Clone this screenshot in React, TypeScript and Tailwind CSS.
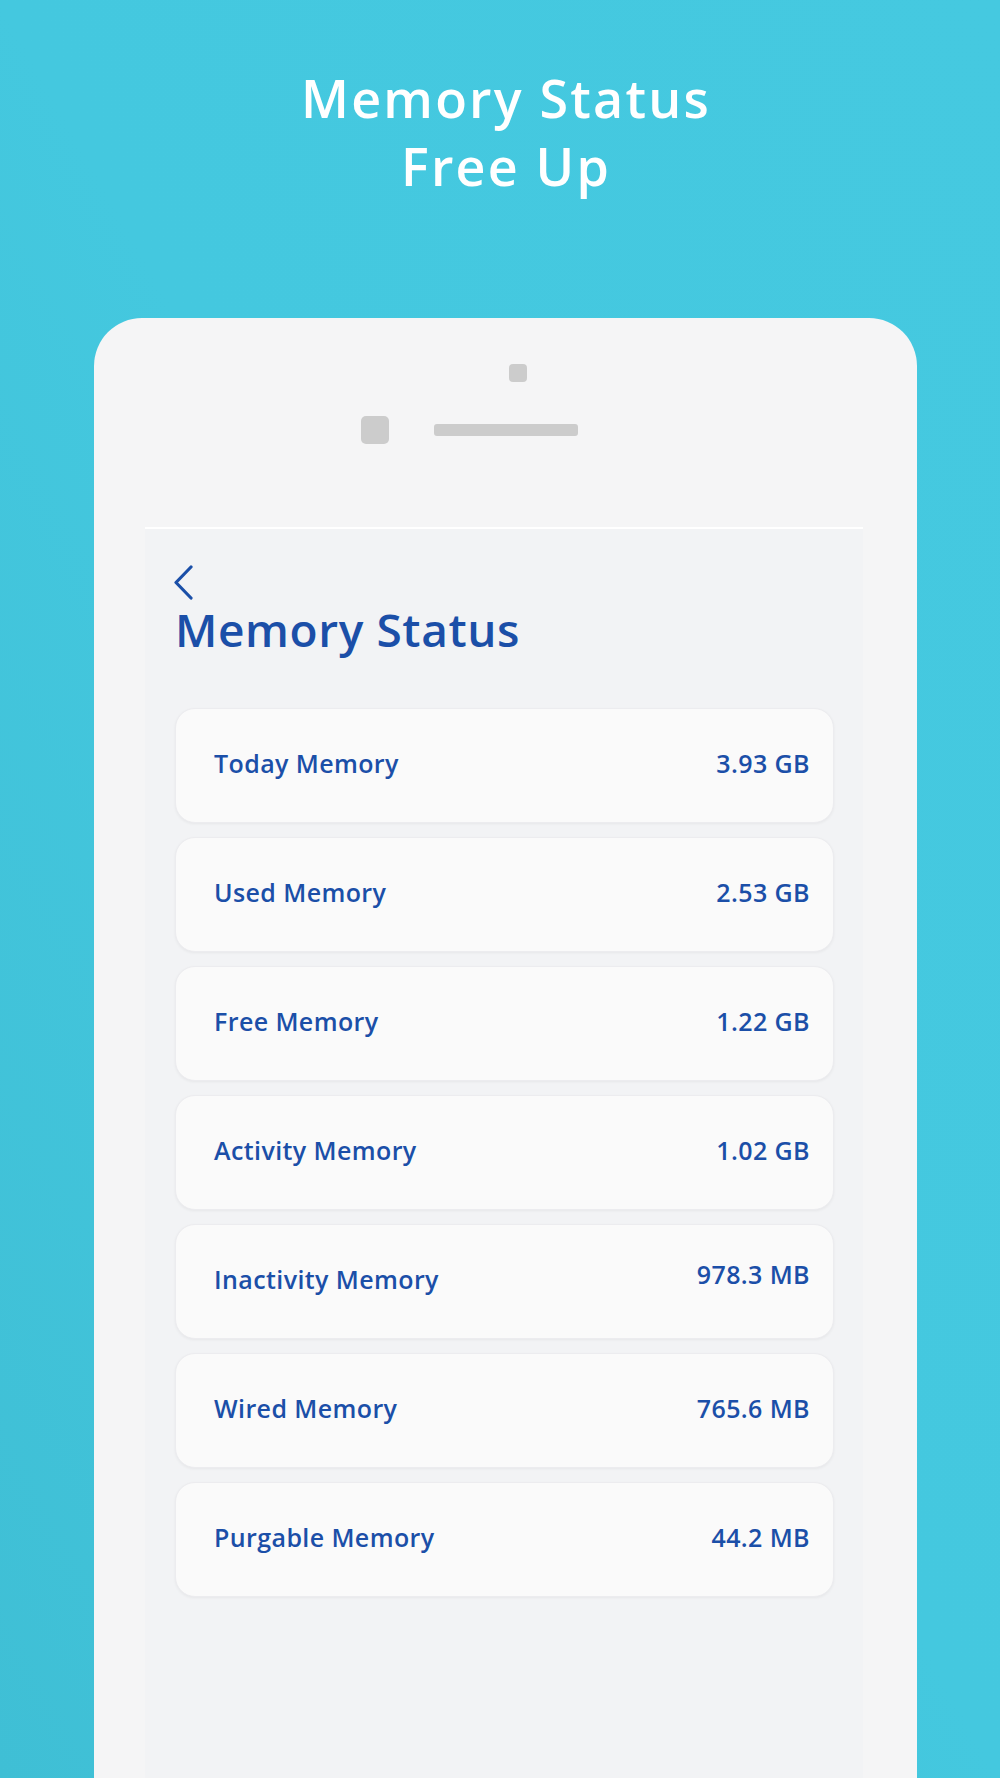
type Row = {
  label: string;
  value: string;
  lift?: boolean;
};

const ROWS: Row[] = [
  { label: "Today Memory", value: "3.93 GB" },
  { label: "Used Memory", value: "2.53 GB" },
  { label: "Free Memory", value: "1.22 GB" },
  { label: "Activity Memory", value: "1.02 GB" },
  { label: "Inactivity Memory", value: "978.3 MB", lift: true },
  { label: "Wired Memory", value: "765.6 MB" },
  { label: "Purgable Memory", value: "44.2 MB" },
];

const font = { fontFamily: '"Open Sans", "Noto Sans", sans-serif' };

export default function App() {
  return (
    <div
      className="flex h-[1778px] w-[1000px] flex-col overflow-hidden bg-gradient-to-tr from-[#3fbfd5] via-[#44c8df] to-[#45c9e0]"
      style={font}
    >
      {/* heading above the device */}
      <div className="pl-[12px] pt-[64px] text-center text-[52px] font-semibold leading-[68px] tracking-[2.2px] text-white">
        <div>Memory Status</div>
        <div>Free Up</div>
      </div>

      {/* device frame */}
      <div className="ml-[94px] mt-[118px] flex w-[823px] flex-1 flex-col rounded-t-[48px] bg-[#f5f5f6]">
        <div className="flex h-[209px] flex-col pt-[46px]">
          <div className="ml-[415px] h-[18px] w-[18px] rounded-[4px] bg-[#cccccc]" />
          <div className="ml-[267px] mt-[34px] flex items-center gap-[45px]">
            <div className="h-[28px] w-[28px] rounded-[5px] bg-[#cccccc]" />
            <div className="h-[12px] w-[144px] rounded-[3px] bg-[#cccccc]" />
          </div>
        </div>

        {/* screen */}
        <div className="ml-[51px] flex w-[718px] flex-1 flex-col border-t-2 border-white bg-[#f2f3f5] px-[30px] pt-[36px]">
          <svg width="22" height="35" viewBox="0 0 22 35" className="-ml-[3px] text-[#1b4fa8]" fill="none">
            <path d="M19 2 L4 17.5 L19 33" stroke="currentColor" strokeWidth="3.2" strokeLinecap="round" strokeLinejoin="round" />
          </svg>
          <h1 className="mt-[1px] text-[46px] font-semibold leading-[56px] tracking-[0.6px] text-[#1b4fa8]">
            Memory Status
          </h1>

          <div className="mt-[51px] flex w-[659px] flex-col gap-[14px]">
            {ROWS.map((row) => (
              <div
                key={row.label}
                className="flex h-[115px] items-center justify-between rounded-[20px] border border-[#ececef] bg-[#fafafa] pb-[4px] pl-[38px] pr-[23px] text-[25px] font-semibold tracking-[0.4px] text-[#1b4fa8] shadow-[0_1px_3px_rgba(0,0,0,0.05)]"
              >
                <span>{row.label}</span>
                <span className={row.lift ? "mb-[10px]" : ""}>{row.value}</span>
              </div>
            ))}
          </div>
        </div>
      </div>
    </div>
  );
}
